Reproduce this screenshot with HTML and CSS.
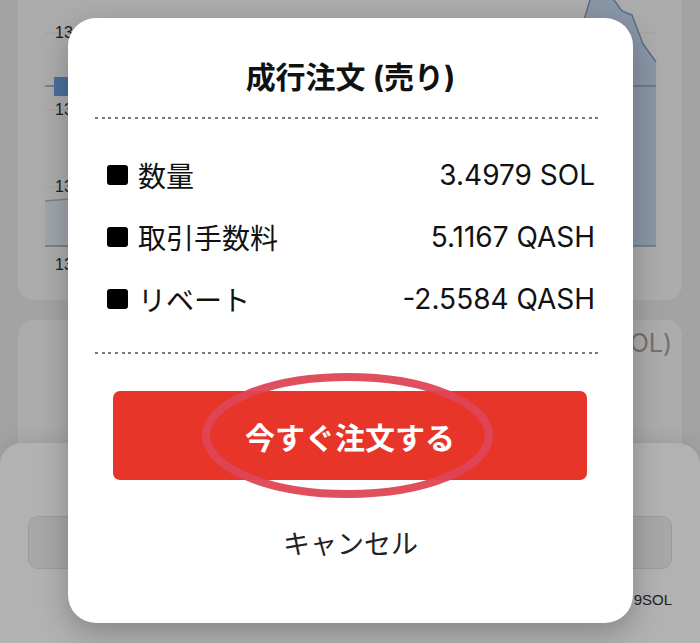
FILE: index.html
```html
<!DOCTYPE html>
<html lang="ja">
<head>
<meta charset="utf-8">
<title>成行注文</title>
<link rel="stylesheet" href="styles.css">
</head>
<body>
<div class="screen">
  <main class="page">
    <section class="card chart-card">
      <svg class="chart" viewBox="18 0 664 300" xmlns="http://www.w3.org/2000/svg">
        <g class="grid">
          <line x1="45" y1="33" x2="656" y2="33"/>
          <line x1="45" y1="110" x2="656" y2="110"/>
          <line x1="45" y1="187" x2="656" y2="187"/>
        </g>
        <path class="area-right" d="M578,40 L590,0 L614,0 L622,11 L632,15 L643,44 L656,62 L656,246 L560,246 Z"/>
        <path class="area-right-line" d="M578,40 L590,0 M614,0 L622,11 L632,15 L643,44 L656,62"/>
        <path class="area-left" d="M45,201 L140,193 L140,246 L45,246 Z"/>
        <path class="area-left-line" d="M45,201 L140,193"/>
        <line class="price-line" x1="45" y1="86" x2="656" y2="86"/>
        <rect class="candle" x="54" y="77" width="30" height="19"/>
        <line class="axis" x1="45" y1="246" x2="656" y2="246"/>
        <text class="tick" x="55" y="38">134.50</text>
        <text class="tick" x="55" y="115">134.00</text>
        <text class="tick" x="55" y="192">133.50</text>
        <text class="tick" x="55" y="270">13:00</text>
      </svg>
    </section>
    <section class="card form-card">
      <div class="form-label">注文数量 (SOL)</div>
    </section>
  </main>

  <div class="sheet">
    <div class="sheet-input"></div>
    <div class="sheet-note">最大 3.4979SOL</div>
  </div>

  <div class="overlay"></div>

  <div class="modal">
    <h2 class="modal-title">成行注文 (売り)</h2>
    <div class="dots"></div>
    <ul class="rows">
      <li class="row"><span class="bullet"></span><span class="label">数量</span><span class="value">3.4979 SOL</span></li>
      <li class="row"><span class="bullet"></span><span class="label">取引手数料</span><span class="value">5.1167 QASH</span></li>
      <li class="row"><span class="bullet"></span><span class="label">リベート</span><span class="value">-2.5584 QASH</span></li>
    </ul>
    <div class="dots dots-bottom"></div>
    <div class="btn-wrap">
      <button class="order-btn" type="button">今すぐ注文する</button>
      <svg class="ring" viewBox="0 0 300 133" xmlns="http://www.w3.org/2000/svg">
        <ellipse cx="149.5" cy="66.5" rx="141.5" ry="58.5"/>
      </svg>
    </div>
    <div class="cancel">キャンセル</div>
  </div>
</div>
</body>
</html>
```

FILE: styles.css
```css
html, body {
  margin: 0;
  padding: 0;
}

body {
  width: 700px;
  height: 643px;
  overflow: hidden;
  background: #eaeaea;
  font-family: "Inter", "Noto Sans CJK JP", sans-serif;
}

.screen {
  position: relative;
  width: 700px;
  height: 643px;
  overflow: hidden;
}

.page {
  padding: 0 18px;
}

.card {
  background: #f7f7f7;
}

.chart-card {
  height: 300px;
  border-radius: 0 0 16px 16px;
}

.chart {
  display: block;
  width: 664px;
  height: 300px;
}

.grid line {
  stroke: #e6e6e6;
  stroke-width: 1;
}

.area-right {
  fill: #c4d7ee;
}

.area-right-line {
  fill: none;
  stroke: #7f9dc2;
  stroke-width: 1.5;
}

.area-left {
  fill: #e4ecf6;
}

.area-left-line {
  fill: none;
  stroke: #a9bad0;
  stroke-width: 1.5;
}

.price-line {
  stroke: #8fa3bb;
  stroke-width: 1.5;
}

.candle {
  fill: #6a9fde;
}

.axis {
  stroke: #93a6bd;
  stroke-width: 1.5;
}

.tick {
  font-family: "Liberation Sans", sans-serif;
  font-size: 16px;
  fill: #2a2a2a;
}

.form-card {
  margin-top: 20px;
  height: 220px;
  border-radius: 16px;
  padding: 8px 10px 0;
  box-sizing: border-box;
}

.form-label {
  text-align: right;
  font-size: 25px;
  line-height: 30px;
  color: #a2a2a2;
}

.sheet {
  position: absolute;
  left: 0;
  right: 0;
  top: 443px;
  bottom: 0;
  background: #ffffff;
  border-radius: 22px 22px 0 0;
  padding: 73px 28px 0;
  box-shadow: 0 -6px 18px rgba(0, 0, 0, 0.08);
}

.sheet-input {
  height: 53px;
  box-sizing: border-box;
  border: 1.5px solid #e0e0e0;
  background: #f0f0f0;
  border-radius: 10px;
}

.sheet-note {
  margin-top: 21px;
  text-align: right;
  font-family: "Liberation Sans", "Noto Sans CJK JP", sans-serif;
  font-size: 15px;
  line-height: 20px;
  color: #333;
}

.overlay {
  position: absolute;
  inset: 0;
  background: rgba(0, 0, 0, 0.3);
}

.modal {
  position: absolute;
  left: 68px;
  top: 18px;
  width: 565px;
  height: 605px;
  box-sizing: border-box;
  padding-top: 39px;
  display: flex;
  flex-direction: column;
  background: #ffffff;
  border-radius: 28px;
  box-shadow: 0 10px 30px rgba(0, 0, 0, 0.25);
  color: #111;
}

.modal-title {
  margin: 0;
  text-align: center;
  font-size: 30px;
  line-height: 40px;
  font-weight: 700;
}

.dots {
  height: 2px;
  margin: 20px 31px 0 27px;
  background: repeating-linear-gradient(to right, #7a7a7a 0 3px, transparent 3px 6.67px);
}

.dots-bottom {
  margin-top: 22px;
}

.rows {
  list-style: none;
  margin: 25px 0 0;
  padding: 0 38px 0 39px;
}

.row {
  display: flex;
  align-items: center;
  height: 62px;
  font-size: 28px;
}

.bullet {
  flex: none;
  width: 21px;
  height: 20px;
  margin-right: 10px;
  background: #000;
  border-radius: 3px;
}

.label {
  flex: 1;
  font-family: "Noto Sans CJK JP", sans-serif;
}

.value {
  font-family: "Inter", "Noto Sans CJK JP", sans-serif;
}

.btn-wrap {
  position: relative;
  margin: 37px 46px 0 45px;
}

.order-btn {
  display: block;
  width: 100%;
  height: 89px;
  border: 0;
  border-radius: 7px;
  background: #e8352a;
  color: #fff;
  font-family: "Noto Sans CJK JP", sans-serif;
  font-size: 30px;
  font-weight: 700;
  line-height: 1;
  padding: 0;
}

.ring {
  position: absolute;
  left: 85px;
  top: -22px;
  width: 300px;
  height: 133px;
  pointer-events: none;
}

.ring ellipse {
  fill: none;
  stroke: #df4656;
  stroke-width: 8;
  opacity: 0.95;
}

.cancel {
  margin-top: 43px;
  text-align: center;
  font-family: "Noto Sans CJK JP", sans-serif;
  font-size: 27px;
  line-height: 40px;
  color: #222;
}
```
